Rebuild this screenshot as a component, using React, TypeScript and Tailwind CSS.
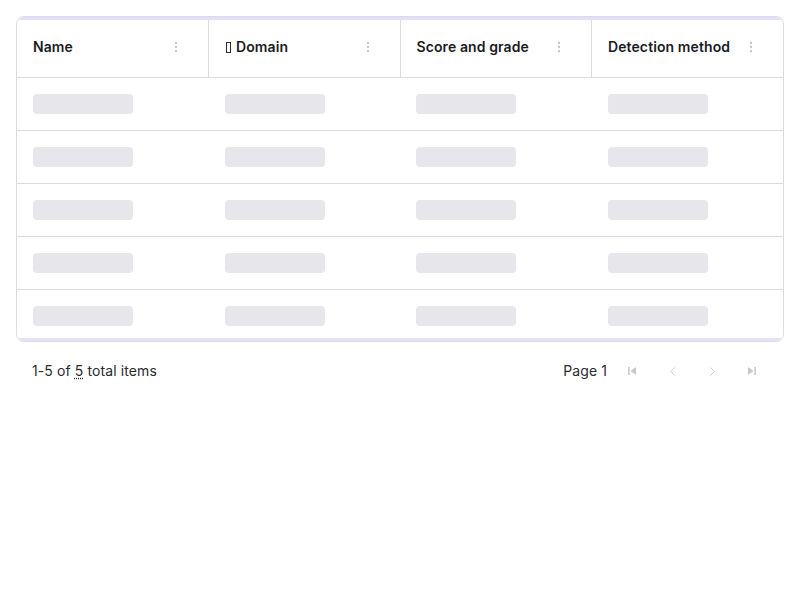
import React from 'react';
import { EllipsisVertical, ChevronLeft, ChevronRight } from 'lucide-react';

const columns = [
  { key: 'name', label: 'Name', tofu: false },
  { key: 'domain', label: 'Domain', tofu: true },
  { key: 'score', label: 'Score and grade', tofu: false },
  { key: 'detection', label: 'Detection method', tofu: false },
];

const rows = [0, 1, 2, 3, 4];

const FirstIcon = () => (
  <svg width="12" height="12" viewBox="0 0 12 12" fill="currentColor">
    <rect x="2" y="2" width="1.6" height="8" />
    <path d="M10 2 L4.5 6 L10 10 Z" />
  </svg>
);

const LastIcon = () => (
  <svg width="12" height="12" viewBox="0 0 12 12" fill="currentColor">
    <rect x="8.4" y="2" width="1.6" height="8" />
    <path d="M2 2 L7.5 6 L2 10 Z" />
  </svg>
);

export default function App() {
  return (
    <div className="min-h-[600px] w-[800px] bg-white p-4 font-['Inter','Liberation_Sans',sans-serif] text-[#1b1b1f]">
      {/* Table card */}
      <div className="overflow-hidden rounded-lg border border-[#dcdbe0]">
        <div className="h-[3px] bg-[#e4e0fb]" />
        <table className="w-full table-fixed border-collapse">
          <thead>
            <tr className="h-[57px] border-b border-[#dcdbe0]">
              {columns.map((col, i) => (
                <th
                  key={col.key}
                  className={`p-0 text-left align-middle ${i < columns.length - 1 ? 'border-r border-[#dcdbe0]' : ''}`}
                >
                  <div className="flex items-center justify-between pb-[2px] pl-4 pr-[25px]">
                    <span className="flex items-center text-sm font-semibold tracking-[0.1px] text-[#1b1b1f]">
                      {col.tofu && (
                        <span className="ml-px mr-[5px] inline-block h-[11px] w-[5px] border border-[#2a2a2a]" />
                      )}
                      {col.label}
                    </span>
                    <EllipsisVertical size={14} className="text-[#c3c2cb]" />
                  </div>
                </th>
              ))}
            </tr>
          </thead>
          <tbody>
            {rows.map((r) => (
              <tr
                key={r}
                className={r < rows.length - 1 ? 'h-[53px] border-b border-[#dcdbe0]' : 'h-[49px]'}
              >
                {columns.map((col) => (
                  <td key={col.key} className={`pl-4 ${r < rows.length - 1 ? 'align-middle' : 'align-top pt-4'}`}>
                    <div className="h-5 w-[100px] rounded bg-[#e7e6eb]" />
                  </td>
                ))}
              </tr>
            ))}
          </tbody>
        </table>
        <div className="h-[3px] bg-[#e4e0fb]" />
      </div>

      {/* Pagination */}
      <div className="mt-[17px] flex h-6 items-center justify-between px-4 text-sm tracking-[0.1px] text-[#2b2b30]">
        <span>
          1-5 of{' '}
          <abbr title="5" className="underline decoration-dotted underline-offset-2">
            5
          </abbr>{' '}
          total items
        </span>
        <div className="flex items-center gap-2">
          <span className="mr-px">Page 1</span>
          <button className="flex h-8 w-8 items-center justify-center text-[#c8c7cf]">
            <FirstIcon />
          </button>
          <button className="flex h-8 w-8 items-center justify-center text-[#c8c7cf]">
            <ChevronLeft size={15} strokeWidth={1.5} />
          </button>
          <button className="flex h-8 w-8 items-center justify-center text-[#c8c7cf]">
            <ChevronRight size={15} strokeWidth={1.5} />
          </button>
          <button className="flex h-8 w-8 items-center justify-center text-[#c8c7cf]">
            <LastIcon />
          </button>
        </div>
      </div>
    </div>
  );
}
